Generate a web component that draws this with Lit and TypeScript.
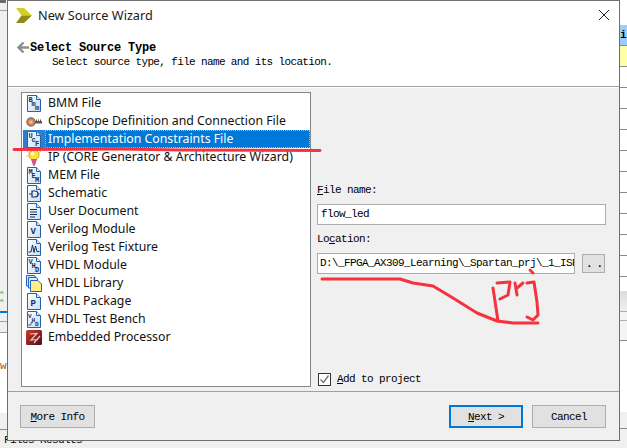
import { LitElement, html, css, svg } from "lit";
import { customElement } from "lit/decorators.js";

const doc = (inner: unknown, id: string) => svg`
  <defs><linearGradient id=${id} x1="0" y1="0" x2="1" y2="1"><stop offset="0" stop-color="#ffffff"/><stop offset="1" stop-color="#c9dcf3"/></linearGradient></defs>
  <path d="M1.5 .5H10.5L14.5 4.5V16.5H1.5Z" fill=${`url(#${id})`} stroke="#1f64b4"/>
  <path d="M10.5 .5V4.5H14.5" fill="#dbe8f7" stroke="#1f64b4"/>
  ${inner}`;

const t = (x: number, y: number, s: string, size = 7) =>
  svg`<text x=${x} y=${y} font-family="Liberation Mono, monospace" font-weight="700" font-size=${size} fill="#12305c">${s}</text>`;

const icons: Record<string, unknown> = {
  bmm: doc(svg`${t(2.5, 7, "B")}${t(5.5, 11, "m")}${t(9, 15, "m")}`, "g1"),
  chip: svg`
    <circle cx="5" cy="9" r="4" fill="#e9854e" stroke="#77736d" stroke-width="1.5"/>
    <circle cx="5" cy="9" r="1.5" fill="#f6c09c"/>
    <path d="M9 8H16V10.5H9Z" fill="#5f5c58"/>
    <path d="M10.5 6.5V8M12.5 6.5V8M14.5 6.5V8" stroke="#5f5c58"/>`,
  ucf: doc(svg`${t(2.5, 7, "U")}${t(5.5, 11, "c")}${t(9, 15, "F")}`, "g3"),
  ip: svg`
    <circle cx="8" cy="6" r="5" fill="#ffe23c" stroke="#d9a520"/>
    <circle cx="6.5" cy="4.5" r="1.8" fill="#fff8c0"/>
    <path d="M1 2L3 3.5M15 2L13 3.5M.5 7H2.5" stroke="#e8a8c0"/>
    <path d="M5.5 10.5L10.5 10.5L8.5 16.5H7.5Z" fill="#d65a86" stroke="#b33e6c" stroke-width=".6"/>`,
  mem: doc(svg`${t(2.5, 7, "M")}${t(5.5, 11, "E")}${t(9, 15, "M")}`, "g5"),
  sch: doc(svg`<path d="M6 6H9A3 3 0 0 1 9 12H6Z" fill="none" stroke="#12305c" stroke-width="1.2"/><path d="M3 9H6M12 9H13.5" stroke="#12305c"/>`, "g6"),
  usr: doc(svg`<path d="M4 6.5H11M4 9H11M4 11.5H11M4 14H9" stroke="#12305c"/>`, "g7"),
  v: doc(t(4.5, 12.5, "V", 9), "g8"),
  vtf: doc(svg`<path d="M2.5 13H5L6.5 6L8 13.5L9.5 7L11 12.5H13.5" fill="none" stroke="#12305c"/>`, "g9"),
  vhd: doc(svg`${t(2.5, 7, "V")}${t(5.5, 11, "H")}${t(9, 15, "D")}`, "g10"),
  lib: svg`
    <path d="M.5 .5H8.5L9.5 2V11H.5Z" fill="#cfe2f8" stroke="#1f64b4"/>
    <path d="M2.5 2.5H10.5L11.5 4V13H2.5Z" fill="#dcebfb" stroke="#1f64b4"/>
    <path d="M4.5 5.5H12L15.5 9V16.5H4.5Z" fill="#ffec8a" stroke="#1f64b4"/>`,
  p: doc(t(4.5, 12.5, "P", 9), "g12"),
  vtb: doc(svg`${t(2, 6.5, "V", 6)}${t(5.5, 10.5, "H", 6)}${t(9, 15, "D", 6)}<path d="M2 14H5V11.5H7" fill="none" stroke="#12305c" stroke-width=".7"/>`, "g13"),
  emb: svg`
    <defs><linearGradient id="g14" x1="0" y1="0" x2="1" y2="1"><stop offset="0" stop-color="#d23a2c"/><stop offset="1" stop-color="#4c0f14"/></linearGradient></defs>
    <rect x="0" y="1" width="16" height="15" rx="1.5" fill="url(#g14)"/>
    <path d="M4 5L11 4.5L5 11L12 10.5M8 14L14 7" fill="none" stroke="#f0c8c0" stroke-width="1.2"/>`,
};

const rows = [
  ["bmm", "BMM File"],
  ["chip", "ChipScope Definition and Connection File"],
  ["ucf", "Implementation Constraints File"],
  ["ip", "IP (CORE Generator & Architecture Wizard)"],
  ["mem", "MEM File"],
  ["sch", "Schematic"],
  ["usr", "User Document"],
  ["v", "Verilog Module"],
  ["vtf", "Verilog Test Fixture"],
  ["vhd", "VHDL Module"],
  ["lib", "VHDL Library"],
  ["p", "VHDL Package"],
  ["vtb", "VHDL Test Bench"],
  ["emb", "Embedded Processor"],
];

@customElement("app-root")
export class AppRoot extends LitElement {
  static styles = css`
    :host { display: block; position: relative; width: 627px; height: 448px; overflow: hidden; background: #f0f0f0;
      font-family: "Liberation Mono", monospace; color: #000; }
    .desk { position: absolute; inset: 0; display: flex; justify-content: space-between; }
    .strip { display: flex; flex-direction: column; width: 7px; overflow: hidden; }
    .topmark { height: 3px; width: 6px; background: #6a6a6a; flex: none; }
    .l1 { height: 7px; border-bottom: 1px solid #a0a0a0; flex: none; }
    .greenbits { height: 16px; margin-top: 278px; color: #1f9a50; font-size: 6px; line-height: 8px; flex: none; }
    .blue { height: 2px; margin-top: 6px; background: #0078d7; flex: none; }
    .l3 { height: 8px; border-bottom: 1px solid #a0a0a0; flex: none; }
    .l4 { height: 10px; border-bottom: 1px solid #a0a0a0; flex: none; }
    .white { height: 80px; background: #fff; color: #a0561a; font-size: 11px; line-height: 66px; flex: none; white-space: nowrap; }
    .grey { height: 16px; background: #f0f0f0; border-bottom: 1px solid #8a8a8a; flex: none; }
    .rightstrip { background: #fff; }
    .rtop { height: 25px; flex: none; }
    .rblue { height: 21px; background: #99ccff; font-size: 11px; font-weight: 700; line-height: 20px; flex: none; white-space: nowrap; border-bottom: 1px solid #8a8a8a; box-sizing: border-box; }
    .ryellow { height: 21px; background: #ffffa8; border-bottom: 1px solid #8a8a8a; box-sizing: border-box; flex: none; }
    .rrow { height: 21px; border-bottom: 1px solid #8a8a8a; box-sizing: border-box; flex: none; }
    .rgap { height: 14px; flex: none; }
    .rgrad { height: 20px; background: linear-gradient(#dcdcdc, #f0f0f0); border-bottom: 1px solid #b0b0b0; flex: none; }
    .rl { height: 8px; border-bottom: 1px solid #b0b0b0; flex: none; background: #f4f4f4; }
    .rl2 { height: 19px; border-bottom: 1px solid #8a8a8a; flex: none; background: #f4f4f4; }
    .rwhite { height: 71px; flex: none; }
    .rgrey { height: 16px; background: #f0f0f0; border-bottom: 1px solid #8a8a8a; flex: none; }
    .rend { flex: 1; background: #f0f0f0; }
    .results { position: absolute; left: 4px; top: 434px; font-size: 11px; letter-spacing: -.6px; line-height: 12px; white-space: nowrap; }

    .win { position: absolute; left: 7px; top: 0; width: 613px; height: 441px; box-sizing: border-box;
      border: 1px solid #6f6f6f; background: #f0f0f0; display: flex; flex-direction: column; }
    .head { height: 85px; flex: none; background: #fff; border-bottom: 1px solid #a0a0a0; position: relative; box-sizing: content-box; }
    .titlebar { display: flex; align-items: center; height: 28px; padding-left: 8px; gap: 5px; }
    .title { font-family: "Noto Sans", sans-serif; font-size: 12.7px; color: #1a1a1a; }
    .close { position: absolute; right: 9px; top: 8px; }
    .sect { display: flex; align-items: flex-start; padding: 12px 0 0 8px; }
    .sect-t { font-weight: 700; font-size: 12px; letter-spacing: -.2px; line-height: 14px; }
    .sub { font-size: 11px; letter-spacing: -.64px; line-height: 13px; padding: 1px 0 0 44px; white-space: pre; }

    .body { flex: 1; display: flex; padding: 4px 12px 4px 13px; gap: 6px; min-height: 0; border-top: 1px solid #fff; }
    .list { width: 290px; box-sizing: border-box; border: 1px solid #828790; background: #fff; padding: 1px 0 0 1px; flex: none; }
    .row { display: flex; height: 18px; align-items: stretch; font-family: "Noto Sans", sans-serif; font-size: 12.3px; color: #111; }
    .ic { width: 22px; flex: none; display: flex; align-items: center; padding-left: 3px; box-sizing: border-box; }
    .tx { flex: 1; padding: 0 0 2px 3px; display: flex; align-items: center; white-space: nowrap; }
    .sel .ic { background: #2a7fd0; }
    .sel .tx { background: #0078d7; color: #fff; outline: 1px dotted #f0b060; outline-offset: -1px; }

    .form { flex: 1; display: flex; flex-direction: column; padding-top: 91px; min-width: 0; font-size: 11px; letter-spacing: -.6px; }
    .lab { height: 21px; line-height: 14px; flex: none; }
    u { text-decoration-thickness: 1px; }
    .inp { height: 21px; box-sizing: border-box; border: 1px solid #adadad; background: #fff; padding: 0 3px; line-height: 19px; overflow: hidden; white-space: nowrap; flex: none; }
    .f1 { width: 289px; margin-bottom: 7px; }
    .locrow { display: flex; gap: 7px; align-items: center; flex: none; }
    .f2 { width: 258px; padding: 0 2px; }
    .dots { width: 23px; height: 19px; box-sizing: border-box; background: #e1e1e1; border: 1px solid #adadad; font-weight: 700; line-height: 19px; text-align: center; letter-spacing: 4px; padding-left: 3px; }
    .grow { flex: 1; }
    .chk { display: flex; align-items: center; gap: 6px; padding-left: 1px; height: 14px; margin-bottom: 1px; }
    .box { width: 13px; height: 13px; box-sizing: border-box; border: 1px solid #333; background: #fff; display: flex; }

    .foot { height: 49px; flex: none; border-top: 1px solid #a0a0a0; display: flex; align-items: flex-start; padding: 13px 13px 0 12px; gap: 9px; box-sizing: border-box; font-size: 11px; letter-spacing: -.6px; }
    .btn { width: 74px; height: 23px; box-sizing: border-box; background: #e1e1e1; border: 1px solid #adadad; display: flex; align-items: center; justify-content: center; white-space: pre; }
    .wide { width: 75px; }
    .primary { border: 2px solid #0078d7; }
    .spacer { flex: 1; }
    .ink { position: absolute; inset: 0; pointer-events: none; }
  `;

  private leftStrip() {
    return html`<div class="strip">
      <div class="topmark"></div><div class="l1"></div>
      <div class="greenbits">e<br />e</div>
      <div class="blue"></div><div class="l3"></div><div class="l4"></div>
      <div class="white">w</div><div class="grey"></div>
    </div>`;
  }

  private rightStrip() {
    return html`<div class="strip rightstrip">
      <div class="rtop"></div><div class="rblue">i</div><div class="ryellow"></div>
      ${Array.from({ length: 10 }, () => html`<div class="rrow"></div>`)}
      <div class="rgap"></div><div class="rgrad"></div><div class="rl"></div><div class="rl2"></div>
      <div class="rwhite"></div><div class="rgrey"></div><div class="rend"></div>
    </div>`;
  }

  render() {
    return html`
      <div class="desk">${this.leftStrip()}${this.rightStrip()}</div>
      <div class="results">Files Results</div>
      <div class="win">
        <div class="head">
          <div class="titlebar">
            <svg width="17" height="15" viewBox="0 0 17 15">
              <path d="M0 0H8L16 7.5H5.5Z" fill="#d2d024"/>
              <path d="M5.5 7.5H16L8 15H0Z" fill="#8f8c16"/>
            </svg>
            <span class="title">New Source Wizard</span>
          </div>
          <svg class="close" width="12" height="12" viewBox="0 0 12 12"><path d="M1 1L11 11M11 1L1 11" stroke="#222" stroke-width="1"/></svg>
          <div class="sect">
            <svg width="14" height="13" viewBox="0 0 14 13"><path d="M13 6.5H3M7.5 1.5L2.5 6.5L7.5 11.5" fill="none" stroke="#8d8d8d" stroke-width="2.4"/></svg>
            <span class="sect-t">Select Source Type</span>
          </div>
          <div class="sub">Select source type, file name and its location.</div>
        </div>
        <div class="body">
          <div class="list">
            ${rows.map(([k, label], i) => html`
              <div class="row ${i === 2 ? "sel" : ""}">
                <div class="ic"><svg width="16" height="17" viewBox="0 0 16 17">${icons[k]}</svg></div>
                <div class="tx">${label}</div>
              </div>`)}
          </div>
          <div class="form">
            <div class="lab"><u>F</u>ile name:</div>
            <div class="inp f1">flow_led</div>
            <div class="lab">Lo<u>c</u>ation:</div>
            <div class="locrow">
              <div class="inp f2">D:\\_FPGA_AX309_Learning\\_Spartan_prj\\_1_ISE</div>
              <div class="dots">..</div>
            </div>
            <div class="grow"></div>
            <div class="chk">
              <div class="box"><svg width="11" height="11" viewBox="0 0 11 11"><path d="M1.5 5.5L4.5 8.5L9.5 1.5" fill="none" stroke="#707070" stroke-width="1.3"/></svg></div>
              <span><u>A</u>dd to project</span>
            </div>
          </div>
        </div>
        <div class="foot">
          <div class="btn wide"><span><u>M</u>ore Info</span></div>
          <div class="spacer"></div>
          <div class="btn primary"><span><u>N</u>ext &gt;</span></div>
          <div class="btn">Cancel</div>
        </div>
      </div>
      <svg class="ink" width="627" height="448" viewBox="0 0 627 448" fill="none" stroke="#f5333f" stroke-width="3" stroke-linecap="round" stroke-linejoin="round">
        <path d="M14 149.5L120 149L180 150L320 150.5"/>
        <path d="M322 279H400L413 283L433 286L453 298L477 313L497 321L513 323H538"/>
        <path d="M493 288L498 321M497 283L510 282L508 295L500 299"/>
        <path d="M515 283L517 295M517 288L523 283"/>
        <path d="M530 270L533 273M527 283L534 282L537 302L538 315L533 320L527 317"/>
      </svg>
    `;
  }
}
